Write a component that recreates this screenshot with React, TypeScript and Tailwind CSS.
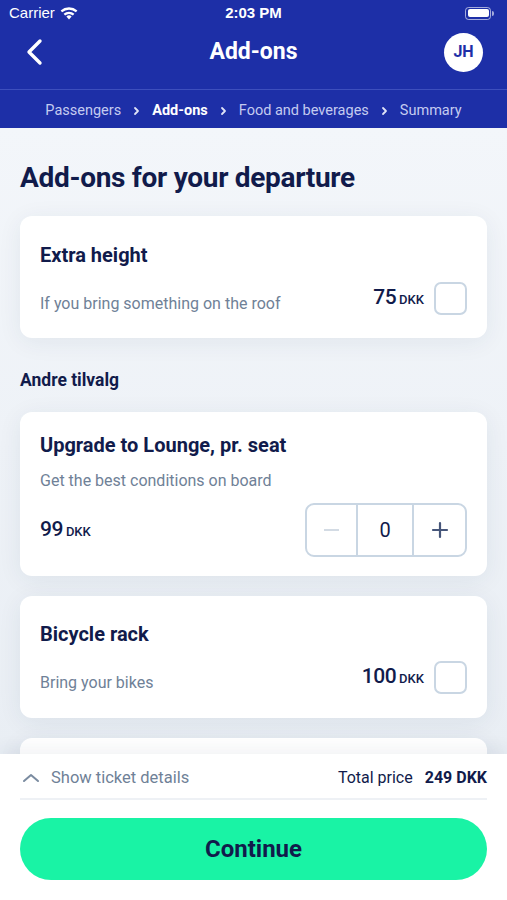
import React from "react";

const navy = "text-[#111b4b]";

function Checkbox() {
  return <div className="w-[33px] h-[33px] rounded-[7px] border-2 border-[#c9d6e3] bg-white" />;
}

function Price({ value }: { value: string }) {
  return (
    <div className={`flex items-baseline gap-[3px] ${navy}`}>
      <span className="text-[21px] font-medium tracking-[-0.5px]">{value}</span>
      <span className="text-[13px] font-medium">DKK</span>
    </div>
  );
}

function Sep() {
  return (
    <svg width="7" height="10" viewBox="0 0 7 10" fill="none" stroke="#dfe3f7" strokeWidth="1.8" strokeLinecap="round" strokeLinejoin="round">
      <path d="M2 2l3 3-3 3" />
    </svg>
  );
}

export default function App() {
  return (
    <div
      className="w-[507px] h-[900px] flex flex-col overflow-hidden bg-[#eef2f7]"
      style={{ fontFamily: "Roboto, 'Noto Sans', sans-serif" }}
    >
      {/* Header */}
      <div className="bg-[#1d2fa7] text-white shrink-0">
        <div className="h-[26px] flex items-center justify-between px-[9px] relative">
          <div className="flex items-center gap-[5px] text-[15px]" style={{ fontFamily: "'Liberation Sans', sans-serif" }}>
            <span>Carrier</span>
            <svg width="18" height="13" viewBox="0 0 18 13" fill="white">
              <path d="M9 12.5l2.6-3.1a4 4 0 00-5.2 0z" />
              <path d="M3.6 6.8l1.5 1.8a6 6 0 017.8 0l1.5-1.8a8.4 8.4 0 00-10.8 0z" />
              <path d="M0.6 3.4l1.5 1.8a10.6 10.6 0 0113.8 0l1.5-1.8a13 13 0 00-16.8 0z" />
            </svg>
          </div>
          <div className="absolute left-0 right-0 text-center text-[15px] font-semibold pointer-events-none" style={{ fontFamily: "'Liberation Sans', sans-serif" }}>
            2:03 PM
          </div>
          <div className="flex items-center gap-[1px] pr-[4px]">
            <div className="w-[26px] h-[13px] rounded-[3.5px] border border-white/60 p-[1.5px]">
              <div className="w-full h-full bg-white rounded-[2px]" />
            </div>
            <div className="w-[2px] h-[5px] bg-white/60 rounded-r" />
          </div>
        </div>
        <div className="h-[63px] pb-[11px] flex items-center justify-between px-[25px] relative">
          <svg width="20" height="28" viewBox="0 0 20 28" fill="none" stroke="white" strokeWidth="3.4" strokeLinecap="round" strokeLinejoin="round">
            <path d="M15 3L4 14l11 11" />
          </svg>
          <div className="absolute left-0 right-0 top-0 h-[52px] flex items-center justify-center text-[23px] font-bold pointer-events-none">Add-ons</div>
          <div className="w-[39px] h-[39px] rounded-full bg-white text-[#1d2fa7] flex items-center justify-center text-[16px] font-bold mr-[-1px]">
            JH
          </div>
        </div>
        <div className="h-px bg-[#3d4fbd]" />
        <div className="h-[38px] pt-[3px] flex items-center justify-center gap-[12px] text-[14.5px] text-[#c4cbf0]">
          <span>Passengers</span>
          <Sep />
          <span className="text-white font-bold">Add-ons</span>
          <Sep />
          <span>Food and beverages</span>
          <Sep />
          <span>Summary</span>
        </div>
      </div>

      {/* Content */}
      <div className="flex-1 overflow-hidden px-[20px] pt-[32px] bg-gradient-to-b from-[#f3f6fa] to-[#e9eef4]">
        <h1 className={`text-[28px] leading-[36px] font-bold ${navy} tracking-[-0.3px]`}>Add-ons for your departure</h1>

        <div className="mt-[20px] bg-white rounded-[12px] shadow-[0_4px_24px_rgba(30,50,90,0.07)] px-[20px] pt-[26px] pb-[22px]">
          <div className={`text-[20px] leading-[26px] font-bold ${navy}`}>Extra height</div>
          <div className="mt-[12px] flex items-center justify-between">
            <div className="text-[16px] text-[#6f8197] mt-[12px]">If you bring something on the roof</div>
            <div className="flex items-center gap-[10px]">
              <Price value="75" />
              <Checkbox />
            </div>
          </div>
        </div>

        <div className={`mt-[31px] text-[17.5px] leading-[22px] font-bold ${navy}`}>Andre tilvalg</div>

        <div className="mt-[21px] bg-white rounded-[12px] shadow-[0_4px_24px_rgba(30,50,90,0.07)] px-[20px] pt-[20px] pb-[19px]">
          <div className={`text-[20px] leading-[26px] font-bold ${navy}`}>Upgrade to Lounge, pr. seat</div>
          <div className="mt-[13px] text-[16px] leading-[20px] text-[#6f8197]">Get the best conditions on board</div>
          <div className="mt-[12px] flex items-center justify-between">
            <Price value="99" />
            <div className="w-[162px] h-[54px] rounded-[9px] border-2 border-[#c9d6e3] flex">
              <div className="w-[51px] flex items-center justify-center border-r-2 border-[#c9d6e3]">
                <div className="w-[15px] h-[2px] bg-[#d3dbe4]" />
              </div>
              <div className={`w-[56px] flex items-center justify-center text-[20px] ${navy} border-r-2 border-[#c9d6e3]`}>0</div>
              <div className="flex-1 flex items-center justify-center">
                <svg width="18" height="18" viewBox="0 0 18 18" stroke="#46567a" strokeWidth="2.2" strokeLinecap="round">
                  <path d="M9 2v14M2 9h14" />
                </svg>
              </div>
            </div>
          </div>
        </div>

        <div className="mt-[20px] bg-white rounded-[12px] shadow-[0_4px_24px_rgba(30,50,90,0.07)] px-[20px] pt-[25px] pb-[23px]">
          <div className={`text-[20px] leading-[26px] font-bold ${navy}`}>Bicycle rack</div>
          <div className="mt-[12px] flex items-center justify-between">
            <div className="text-[16px] text-[#6f8197] mt-[12px]">Bring your bikes</div>
            <div className="flex items-center gap-[10px]">
              <Price value="100" />
              <Checkbox />
            </div>
          </div>
        </div>

        <div className="mt-[20px] bg-white rounded-[12px] h-[80px] shadow-[0_4px_24px_rgba(30,50,90,0.07)]" />
      </div>

      {/* Footer */}
      <div className="h-[146px] shrink-0 bg-white px-[20px] shadow-[0_-6px_16px_rgba(30,50,90,0.06)]">
        <div className="h-[46px] pt-[4px] flex items-center justify-between border-b-2 border-[#eef1f5]">
          <div className="flex items-center gap-[11px] pl-[2px]">
            <svg width="18" height="12" viewBox="0 0 18 12" fill="none" stroke="#7a8ba0" strokeWidth="2" strokeLinecap="round" strokeLinejoin="round">
              <path d="M2 9l7-6 7 6" />
            </svg>
            <span className="text-[16.5px] text-[#6f8197]">Show ticket details</span>
          </div>
          <div className={`flex items-center gap-[12px] text-[16px] ${navy}`}>
            <span>Total price</span>
            <span className="font-bold">249 DKK</span>
          </div>
        </div>
        <div className="mt-[18px] h-[62px] rounded-full bg-[#19f3a5] flex items-center justify-center">
          <span className={`text-[24px] font-bold ${navy}`}>Continue</span>
        </div>
      </div>
    </div>
  );
}
